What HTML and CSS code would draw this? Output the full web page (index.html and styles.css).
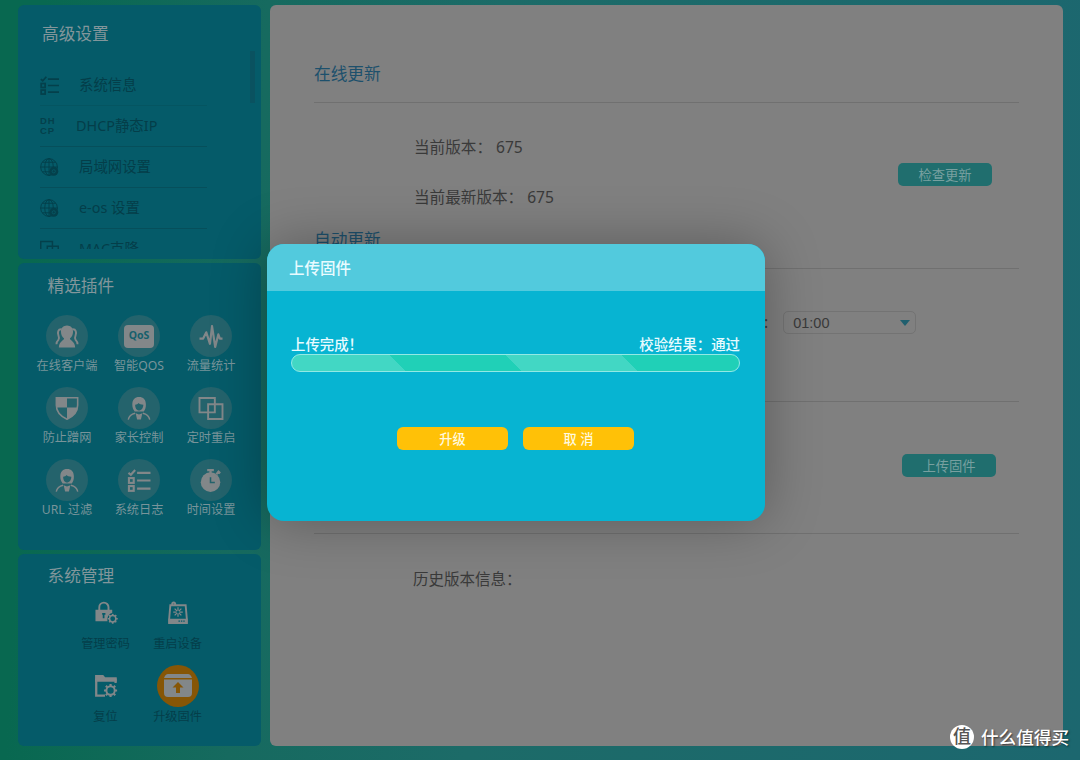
FILE: index.html
```html
<!DOCTYPE html>
<html lang="zh-CN">
<head>
<meta charset="utf-8">
<title>固件升级</title>
<link rel="stylesheet" href="styles.css">
</head>
<body>
<svg class="defs" aria-hidden="true">
  <symbol id="list" viewBox="0 0 24 24"><g fill="none" stroke="currentColor" stroke-width="2.200"><path d="M1 4l2.500 2L8 1M10 4h14M10 12h14M10 20.500h14"/><rect x="1.500" y="9.500" width="5" height="5"/><rect x="1.500" y="17.800" width="5" height="5"/></g></symbol>
  <symbol id="globe" viewBox="0 0 20 20"><g fill="none" stroke="currentColor"><circle cx="9.500" cy="9.500" r="8.800"/><ellipse cx="9.500" cy="9.500" rx="4.500" ry="8.800"/><path d="M9.500.7v17.600M.7 9.500h17.600M2.500 4.500h14M2.500 14.500h14"/></g><circle cx="14.500" cy="14" r="4.700" fill="currentColor"/><circle cx="14.500" cy="14" r="1.700" fill="none" stroke="#055b69" stroke-width=".8"/></symbol>
  <symbol id="squares" viewBox="0 0 26 24"><path d="M1 1h16v15H1zM10 7.500h15V23H10z" fill="none" stroke="currentColor" stroke-width="2"/></symbol>
  <symbol id="users" viewBox="0 0 24 24"><g fill="none" stroke="currentColor" stroke-width="2"><path d="M6.500 4.500C2.500 4 2 8 3 10.500 4 13 4 14 3 15.500 1.500 17 1 18 1 20M17.500 4.500C21.500 4 22 8 21 10.500 20 13 20 14 21 15.500 22.500 17 23 18 23 20"/></g><path d="M12 .5c4 0 6.300 3 6.300 6.500 0 3-1.300 5.500-3.300 7 0 2 5.500 3 5.500 9.500h-17C3.500 17 9 16 9 14 7 12.500 5.700 10 5.700 7 5.700 3.500 8 .5 12 .5z" fill="currentColor"/></symbol>
  <symbol id="pulse" viewBox="0 0 22 22"><path d="M0 13h3.500l3-6 3.500 11L12 1l3 20 3-12 1.500 4H22" fill="none" stroke="currentColor" stroke-width="2.100" stroke-linejoin="round"/></symbol>
  <symbol id="shield" viewBox="0 0 22 22"><path d="M.8.800h20.400v7c0 7-5 11-10.200 13.400C5.800 18.800.8 14.800.8 7.800z" fill="none" stroke="currentColor" stroke-width="1.500"/><path d="M1 1h10v9H1zM11 10h10c-1 6-6 9.500-10 11z" fill="currentColor"/></symbol>
  <symbol id="person" viewBox="0 0 24 24"><path fill="currentColor" fill-rule="evenodd" d="M12 0c4.500 0 7.200 2.800 7.200 8 0 3-.7 5-2.200 7H7.500C6 13 5 11 5 8c0-5.200 2.800-8 7-8zM8 8c0 3.500 1.500 6 4 6s4.500-2.500 4.500-6c-2.500 0-4-.5-5-1.700C10.800 7.500 9.500 8 8 8zM8.500 17L12 18.200l3.500-1.200-1.500 6.500h-4z"/><path d="M.8 23.500c.7-3.500 3-5.500 7.200-6.500M23.200 23.500c-.7-3.500-3-5.500-7.200-6.500" fill="none" stroke="currentColor" stroke-width="1.500"/></symbol>
  <symbol id="watch" viewBox="0 0 22 24"><circle cx="10.500" cy="13.700" r="10.200" fill="currentColor"/><path d="M7 1.200h7M10.500 2v4M16.500 5.500l3-3M18 2l2.500 2.500" fill="none" stroke="currentColor" stroke-width="2.400"/><path d="M10.500 8.500V14H15" fill="none" stroke="#24636c" stroke-width="1.600"/></symbol>
  <symbol id="gear" viewBox="0 0 14 14"><circle cx="7" cy="7" r="4.200" fill="none" stroke="currentColor" stroke-width="2"/><g stroke="currentColor" stroke-width="2.200"><path d="M7 .3v2.200M7 11.500v2.200M.3 7h2.200M11.500 7h2.200M2.300 2.300l1.400 1.400M10.300 10.300l1.400 1.400M2.300 11.700l1.400-1.400M10.300 3.700l1.400-1.400"/></g></symbol>
  <symbol id="lock" viewBox="0 0 24 24"><path d="M5 10V6.500a4.800 4.800 0 0 1 9.600 0V10" fill="none" stroke="currentColor" stroke-width="2"/><path d="M1 9h17.500v3.500c-3 .5-5.500 3.500-5 8.500H1z" fill="currentColor"/><path d="M9.500 12.500v5.500M8 13.500h3.400" stroke="#055b69" stroke-width="1.800"/><use href="#gear" x="13.500" y="13" width="11" height="11"/></symbol>
  <symbol id="router" viewBox="0 0 22 24"><path d="M3 4.500h16l1.200 14V23H1.800v-4.500zM5 4.500V2.500Q6.500.5 8 2.500v2" fill="none" stroke="currentColor" stroke-width="2"/><path d="M1 18.500h20V23.800H1z" fill="currentColor"/><path d="M11 6.500v10M6 11.500h10M7.500 8l7 7M7.500 15l7-7" stroke="currentColor" stroke-width="1.300"/><circle cx="11" cy="11.500" r="1.600" fill="#055b69"/><path d="M11.500 21h7" stroke="#055b69" stroke-width="1.300" stroke-dasharray="1.500 1"/></symbol>
  <symbol id="folder" viewBox="0 0 24 24"><path d="M11 22.500H1.800V6H22v3.500" fill="none" stroke="currentColor" stroke-width="2.400"/><path d="M.6 1h8.500l2 2.500H23.200V8H.6z" fill="currentColor"/><use href="#gear" x="9.500" y="10" width="14.500" height="14.500"/></symbol>
  <symbol id="upload" viewBox="0 0 28 23"><path d="M4 0h20q2.500 0 4 4H0q1.500-4 4-4zM0 5.500h28V19q0 4-4 4H4q-4 0-4-4z" fill="currentColor"/><path d="M14 8l5.500 5.500H16V19h-4v-5.500H8.500z" fill="#865606"/></symbol>
</svg>

<div class="page">
  <aside class="sidebar">
    <section class="panel panel-settings">
      <h2 class="panel-title">高级设置</h2>
      <div class="menu-wrap">
        <ul class="menu">
          <li><svg class="mi"><use href="#list"/></svg><span>系统信息</span></li>
          <li class="dhcp"><b class="mi"><span>DH</span><span>CP</span></b><span>DHCP静态IP</span></li>
          <li><svg class="mi"><use href="#globe"/></svg><span>局域网设置</span></li>
          <li><svg class="mi"><use href="#globe"/></svg><span>e-os 设置</span></li>
          <li><svg class="mi"><use href="#squares"/></svg><span>MAC克隆</span></li>
        </ul>
        <div class="thumb"></div>
      </div>
    </section>

    <section class="panel panel-plugins">
      <h2 class="panel-title">精选插件</h2>
      <div class="plugins">
        <div class="plugin"><i class="disc"><svg><use href="#users"/></svg></i><span>在线客户端</span></div>
        <div class="plugin"><i class="disc"><b class="qos">QoS</b></i><span>智能QOS</span></div>
        <div class="plugin"><i class="disc"><svg><use href="#pulse"/></svg></i><span>流量统计</span></div>
        <div class="plugin"><i class="disc"><svg><use href="#shield"/></svg></i><span>防止蹭网</span></div>
        <div class="plugin"><i class="disc"><svg><use href="#person"/></svg></i><span>家长控制</span></div>
        <div class="plugin"><i class="disc"><svg class="wide"><use href="#squares"/></svg></i><span>定时重启</span></div>
        <div class="plugin"><i class="disc"><svg><use href="#person"/></svg></i><span>URL 过滤</span></div>
        <div class="plugin"><i class="disc"><svg><use href="#list"/></svg></i><span>系统日志</span></div>
        <div class="plugin"><i class="disc"><svg><use href="#watch"/></svg></i><span>时间设置</span></div>
      </div>
    </section>

    <section class="panel panel-system">
      <h2 class="panel-title">系统管理</h2>
      <div class="tools">
        <div class="plugin"><i class="disc"><svg><use href="#lock"/></svg></i><span>管理密码</span></div>
        <div class="plugin"><i class="disc"><svg><use href="#router"/></svg></i><span>重启设备</span></div>
        <div class="plugin"><i class="disc"><svg><use href="#folder"/></svg></i><span>复位</span></div>
        <div class="plugin"><i class="disc active"><svg class="up"><use href="#upload"/></svg></i><span>升级固件</span></div>
      </div>
    </section>
  </aside>

  <main class="content">
    <h3 class="heading first">在线更新</h3>
    <div class="block online">
      <div class="versions">
        <p><span>当前版本：</span><span>675</span></p>
        <p><span>当前最新版本：</span><span>675</span></p>
      </div>
      <button class="btn">检查更新</button>
    </div>
    <h3 class="heading">自动更新</h3>
    <div class="block auto">
      <span>:</span>
      <div class="select"><span>01:00</span><i class="caret"></i></div>
    </div>
    <div class="block manual"><button class="btn">上传固件</button></div>
    <p class="history">历史版本信息：</p>
  </main>
</div>

<div class="modal">
  <header class="modal-head">上传固件</header>
  <div class="modal-body">
    <div class="status"><span>上传完成！</span><span>校验结果：通过</span></div>
    <div class="progress"></div>
    <div class="actions"><button class="action">升级</button><button class="action">取 消</button></div>
  </div>
</div>

<div class="watermark"><i>值</i><span>什么值得买</span></div>
</body>
</html>
```
FILE: styles.css
```css
* { box-sizing: border-box; margin: 0; padding: 0; }
body {
  width: 1080px; height: 760px; overflow: hidden; position: relative;
  font-family: "Noto Sans", "Noto Sans CJK SC", sans-serif;
  background: linear-gradient(93deg, #086850 0%, #086850 4%, #166a5f 24%, #1c6b68 45%, #1c676f 100%);
}
.defs { position: absolute; width: 0; height: 0; }
i { font-style: normal; }
ul { list-style: none; }
button { border: 0; font-family: inherit; }

.page { display: flex; gap: 9px; padding: 5px 17px 14px 18px; height: 760px; }
.sidebar { width: 243px; display: flex; flex-direction: column; gap: 4px; }
.panel { background: #055b69; border-radius: 6px; overflow: hidden; }
.panel-settings { height: 254px; padding: 12px 6px 0 22px; }
.panel-plugins { height: 287px; padding: 6px 13px 0; }
.panel-system { height: 192px; padding: 5px 13px 0; }
.panel-title { font-size: 16.700px; line-height: 34px; font-weight: 400; color: #82969b; padding-left: 16.500px; }
.panel-settings .panel-title { padding-left: 2px; }

.menu-wrap { display: flex; justify-content: space-between; height: 198px; overflow: hidden; }
.menu { width: 167px; padding-top: 14px; }
.menu li { display: flex; align-items: center; height: 41px; border-bottom: 1px solid #064f5b; font-size: 14.400px; color: #043e49; line-height: 40px; }
.menu li:first-child { border-color: #055561; }
.mi { width: 19px; height: 19px; margin-right: 20px; color: #04404b; flex: none; }
.dhcp .mi { width: 17px; height: 20px; margin-right: 19px; display: flex; flex-direction: column; font: 700 9.500px/10px "Liberation Sans", sans-serif; letter-spacing: 1px; }
.thumb { width: 5px; height: 52px; background: #0a5260; }

.plugins { display: grid; grid-template-columns: repeat(3, 72px); grid-auto-rows: 72.200px; padding-top: 12px; }
.plugin { display: flex; flex-direction: column; align-items: center; white-space: nowrap; font-size: 12.200px; line-height: 18px; color: #78949a; }
.disc { width: 42px; height: 42px; border-radius: 50%; background: #24636c; display: flex; align-items: center; justify-content: center; color: #828789; }
.disc svg { width: 24px; height: 23px; }
.disc svg.wide { width: 26px; }
.disc svg.up { width: 28px; height: 23px; }
.qos { width: 30px; height: 23px; border-radius: 4px; background: #828789; color: #17606c; font: 700 10.500px/21px "Noto Sans", sans-serif; text-align: center; }
.tools { display: grid; grid-template-columns: 72px 72px; grid-auto-rows: 72.500px; justify-content: center; padding-left: 4px; }
.panel-system .disc { background: none; flex: none; margin: -1px 0 1px; }
.panel-system .disc svg { margin-top: -1px; }
.panel-system .disc.active { background: #865606; }
.panel-system .disc svg.up { margin: 0; }
.panel-system .plugin { color: #043e49; }

.content { flex: 1; background: #808080; border-radius: 6px; padding: 0 44px; color: #3a3a3a; font-size: 15.500px; }
.heading { height: 47px; font-size: 16.700px; line-height: 36px; font-weight: 400; color: #1d506c; border-bottom: 1px solid #707070; }
.heading.first { height: 98px; padding-top: 51px; }
.block { display: flex; border-bottom: 1px solid #707070; }
.online { height: 119px; padding: 19px 27px 0 100px; justify-content: space-between; border: 0; }
.versions p { display: flex; gap: 4px; height: 50px; line-height: 50px; font-size: 15.600px; }
.btn { width: 94px; height: 23px; border-radius: 5px; background: #206e6e; color: #78a0a0; font-size: 13.300px; line-height: 22px; }
.online .btn { margin-top: 41px; }
.auto { height: 133px; padding: 42px 0 0 450px; gap: 15px; line-height: 23px; }
.select { width: 133px; height: 23px; border: 1px solid #737373; border-radius: 5px; padding: 0 5px 0 9px; display: flex; justify-content: space-between; align-items: center; font: 14.500px "Liberation Sans", sans-serif; }
.caret { border: 5.500px solid transparent; border-top: 6px solid #205f6e; border-bottom: 0; }
.manual { height: 132px; padding: 52px 23px 0 0; justify-content: flex-end; }
.history { padding: 33px 0 0 99px; line-height: 24px; }

.modal { position: absolute; left: 267px; top: 244px; width: 498px; height: 277px; border-radius: 17px; overflow: hidden; background: #07b4d2; color: #e8fbff; box-shadow: 0 0 55px rgba(0, 0, 0, .3); }
.modal-head { height: 47px; padding-left: 22px; background: #52cadd; font-size: 15.500px; line-height: 48px; font-weight: 500; }
.modal-body { padding: 44px 25px 0 24px; }
.status { display: flex; justify-content: space-between; font-size: 14.400px; line-height: 20px; height: 19px; font-weight: 500; }
.progress { height: 18px; border: 1px solid #92e9e4; border-radius: 9px; background: repeating-linear-gradient(45deg, #42d7c4 0 82px, #20d0b7 82px 164px) border-box; }
.actions { display: flex; gap: 15px; justify-content: center; padding-top: 55px; }
.action { width: 111px; height: 23px; border-radius: 6px; background: #ffc107; color: #fff9df; font-size: 13.200px; line-height: 22px; font-weight: 500; }

.watermark { position: absolute; left: 950px; top: 725px; display: flex; align-items: center; gap: 7px; color: #fff; font-size: 17.600px; line-height: 24px; font-weight: 500; text-shadow: 1px 1px 2px rgba(0, 0, 0, .6); white-space: nowrap; }
.watermark i { width: 24px; height: 24px; border-radius: 50%; background: #fff; color: #555; font-size: 18px; line-height: 23px; text-align: center; text-shadow: none; }
```
